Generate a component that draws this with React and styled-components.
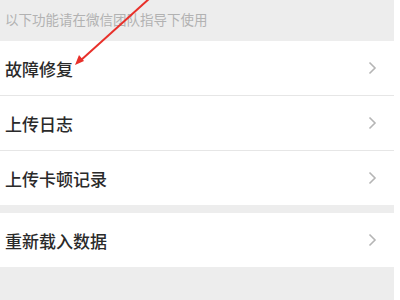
import React from 'react'
import styled, { createGlobalStyle } from 'styled-components'

const GlobalStyle = createGlobalStyle`
  html, body {
    margin: 0;
    padding: 0;
    background: #fff;
    font-family: "Noto Sans CJK SC", "Noto Sans", sans-serif;
  }
`

const items = [
  [{ label: '故障修复' }, { label: '上传日志' }, { label: '上传卡顿记录' }],
  [{ label: '重新载入数据' }],
]

function Chevron() {
  return (
    <svg width="9" height="14" viewBox="0 0 9 14">
      <path d="M1.5 1.5 L7 7 L1.5 12.5" fill="none" stroke="#b5b5b5" strokeWidth="1.6" />
    </svg>
  )
}

function App() {
  return (
    <>
      <GlobalStyle />
      <Page>
        <Tip>以下功能请在微信团队指导下使用</Tip>
        {items.map((group, gi) => (
          <Group key={gi} $first={gi === 0}>
            {group.map((it, i) => (
              <Row key={it.label} $last={i === group.length - 1}>
                <Label>{it.label}</Label>
                <Chevron />
              </Row>
            ))}
          </Group>
        ))}
        <Arrow width="160" height="70" viewBox="0 0 160 70">
          <line x1="150" y1="-2" x2="80" y2="61" stroke="#e8302a" strokeWidth="2" />
          <path d="M75 65 L79 55 L84 61 Z" fill="#e8302a" />
        </Arrow>
      </Page>
    </>
  )
}

export default App

const Page = styled.div`
  position: relative;
  width: 394px;
  height: 300px;
  background: #ededed;
  overflow: hidden;
`

const Tip = styled.div`
  height: 41px;
  padding: 9px 0 0 5px;
  box-sizing: border-box;
  font-size: 13.5px;
  color: #b2b2b2;
  line-height: 20px;
`

const Group = styled.div`
  background: #fff;
  margin-top: ${p => (p.$first ? '0' : '8px')};
`

const Row = styled.div`
  height: 54px;
  display: flex;
  align-items: center;
  justify-content: space-between;
  padding: 0 17px 0 5px;
  border-bottom: ${p => (p.$last ? 'none' : '1px solid #e6e6e6')};
`

const Label = styled.span`
  font-size: 17px;
  color: #2a2a2a;
  font-weight: 500;
  padding-top: 1px;
`

const Arrow = styled.svg`
  position: absolute;
  left: 0;
  top: 0;
`
